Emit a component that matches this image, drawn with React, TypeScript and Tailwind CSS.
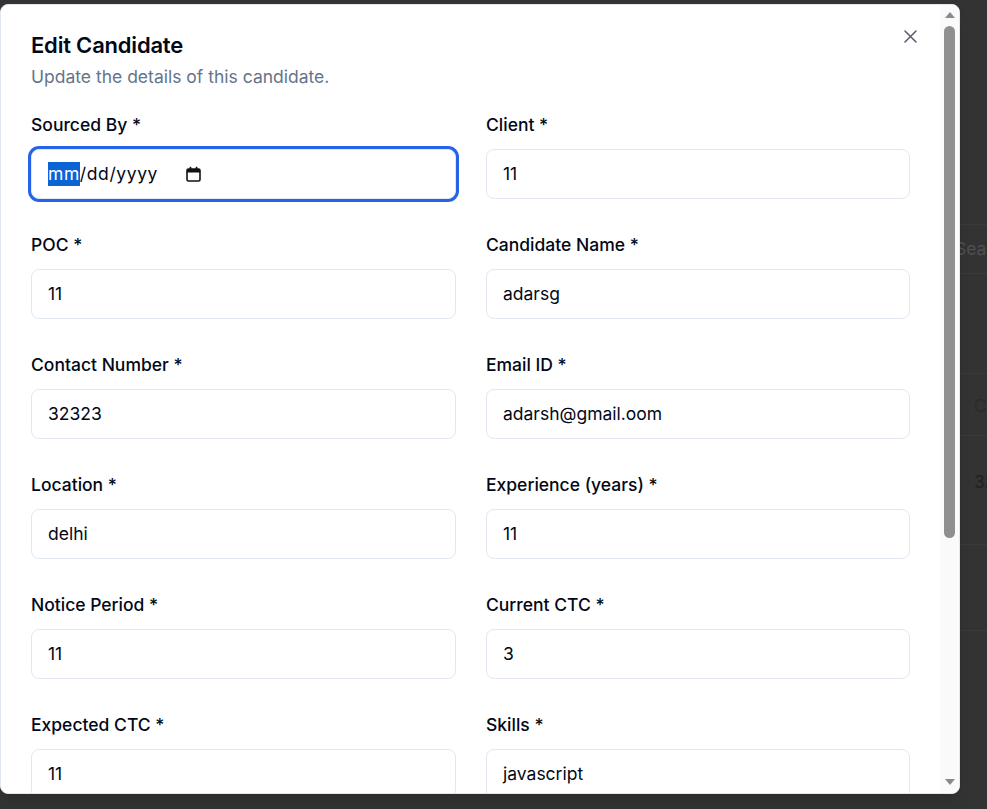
import React from "react";

const fields: [string, string][] = [
  ["POC *", "11"],
  ["Candidate Name *", "adarsg"],
  ["Contact Number *", "32323"],
  ["Email ID *", "adarsh@gmail.oom"],
  ["Location *", "delhi"],
  ["Experience (years) *", "11"],
  ["Notice Period *", "11"],
  ["Current CTC *", "3"],
  ["Expected CTC *", "11"],
  ["Skills *", "javascript"],
];

function Field({ label, value }: { label: string; value: string }) {
  return (
    <div className="flex flex-col gap-3">
      <div className="h-6 text-[17.5px] leading-6 font-medium text-[#020817]">{label}</div>
      <div className="h-[50px] rounded-lg border border-[#e2e8f0] bg-white px-4 flex items-center text-[17.5px] text-[#020817]">
        {value}
      </div>
    </div>
  );
}

function CalendarIcon() {
  return (
    <svg width="15" height="16" viewBox="0 0 15 16" className="ml-[28px]">
      <rect x="1" y="3" width="13" height="12" rx="1.5" fill="none" stroke="#111" strokeWidth="1.6" />
      <rect x="1" y="3" width="13" height="3.5" fill="#111" />
      <rect x="3.6" y="0.8" width="1.7" height="3" fill="#111" />
      <rect x="9.7" y="0.8" width="1.7" height="3" fill="#111" />
    </svg>
  );
}

export default function App() {
  return (
    <div
      className="relative w-[987px] h-[809px] overflow-hidden bg-[#333333]"
      style={{ fontFamily: "Inter, 'Noto Sans', sans-serif" }}
    >
      {/* dimmed page behind */}
      <div className="absolute left-[900px] top-[224px] w-[87px] border-t border-[#3a3a3a]" />
      <div className="absolute left-[900px] top-[273px] w-[87px] border-t border-[#3a3a3a]" />
      <div className="absolute left-[900px] top-[373px] w-[87px] border-t border-[#3a3a3a]" />
      <div className="absolute left-[900px] top-[435px] w-[87px] border-t border-[#3a3a3a]" />
      <div className="absolute left-[900px] top-[544px] w-[87px] border-t border-[#3a3a3a]" />
      <div className="absolute left-[900px] top-[630px] w-[87px] border-t border-[#3a3a3a]" />
      <div className="absolute left-[955px] top-[236px] text-[17.5px] text-[#4f4f4f]">Search</div>
      <div className="absolute left-[974px] top-[393px] text-[17.5px] text-[#2b2b2b]">C</div>
      <div className="absolute left-[974px] top-[469px] text-[17.5px] text-[#222]">32</div>

      {/* modal */}
      <div className="absolute left-0 top-[4px] w-[960px] h-[790px] bg-white rounded-lg border border-[#e2e8f0] overflow-hidden flex shadow-lg">
        <div className="relative flex-1 pl-[30px] pt-[26px]">
          <button className="absolute right-[22px] top-[23px] w-4 h-4 flex items-center justify-center opacity-70">
            <svg width="13" height="13" viewBox="0 0 13 13">
              <path d="M1 1L12 12M12 1L1 12" stroke="#0f172a" strokeWidth="1.5" strokeLinecap="round" />
            </svg>
          </button>
          <div className="text-[22px] leading-7 font-semibold text-[#020817] tracking-[-0.2px]">Edit Candidate</div>
          <div className="mt-[6px] text-[17.5px] leading-6 text-[#64748b]">Update the details of this candidate.</div>

          <div className="mt-[24px] grid grid-cols-[425px_424px] gap-x-[30px] gap-y-[34px]">
            <div className="flex flex-col gap-3">
              <div className="h-6 text-[17.5px] leading-6 font-medium text-[#020817]">Sourced By *</div>
              <div className="h-[50px] rounded-lg border border-[#e2e8f0] bg-white px-4 flex items-center text-[17.5px] text-[#020817] shadow-[0_0_0_3px_#2563eb]">
                <span className="bg-[#0b63d6] text-white leading-6 tracking-[0.6px]">mm</span>
                <span className="leading-6 tracking-[0.6px]">/dd/yyyy</span>
                <CalendarIcon />
              </div>
            </div>
            <Field label="Client *" value="11" />
            {fields.map(([l, v]) => (
              <Field key={l} label={l} value={v} />
            ))}
          </div>
        </div>

        {/* scrollbar */}
        <div className="relative w-[19px] bg-[#fafafa] flex flex-col items-center">
          <div className="mt-[7px] w-0 h-0 border-l-[5px] border-r-[5px] border-b-[6px] border-l-transparent border-r-transparent border-b-[#8a8a8a]" />
          <div className="mt-[8px] w-[11px] h-[512px] rounded-full bg-[#8f8f8f]" />
          <div className="mt-auto mb-[8px] w-0 h-0 border-l-[5px] border-r-[5px] border-t-[6px] border-l-transparent border-r-transparent border-t-[#8a8a8a]" />
        </div>
      </div>
    </div>
  );
}
